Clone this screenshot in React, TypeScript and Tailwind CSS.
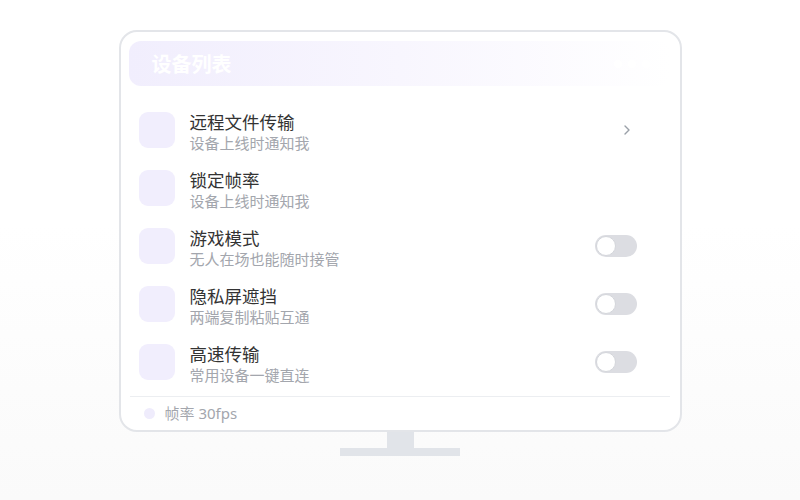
import React from "react";

const FONT = { fontFamily: '"Noto Sans", "Noto Sans CJK SC", sans-serif' };

type Row = { title: string; sub: string; trail: "chevron" | "toggle" | "none" };

const rows: Row[] = [
  { title: "远程文件传输", sub: "设备上线时通知我", trail: "chevron" },
  { title: "锁定帧率", sub: "设备上线时通知我", trail: "none" },
  { title: "游戏模式", sub: "无人在场也能随时接管", trail: "toggle" },
  { title: "隐私屏遮挡", sub: "两端复制粘贴互通", trail: "toggle" },
  { title: "高速传输", sub: "常用设备一键直连", trail: "toggle" },
];

function Toggle() {
  return (
    <div className="w-[42px] h-[22px] rounded-full bg-[#dcdde2] flex items-center p-[1px]">
      <div className="w-[20px] h-[20px] rounded-full bg-white border border-[#d4d6db]" />
    </div>
  );
}

function Chevron() {
  return (
    <svg width="8" height="12" viewBox="0 0 8 12" className="mr-[6px]">
      <path d="M2 2 L6 6 L2 10" fill="none" stroke="#9aa0a8" strokeWidth="1.4" strokeLinecap="round" strokeLinejoin="round" />
    </svg>
  );
}

export default function App() {
  return (
    <div
      className="w-[800px] h-[500px] bg-gradient-to-b from-white from-45% to-[#fafafa] flex flex-col items-center pt-[30px]"
      style={FONT}
    >
      <div className="w-[563px] h-[402px] border-2 border-[#e3e5e9] rounded-[18px] bg-white pt-[9px] pl-[8px] pr-[10px] flex flex-col">
        <div className="h-[45px] rounded-[12px] bg-gradient-to-r from-[#f1eefd] via-[#f8f6fe] to-white flex items-center pl-[23px] pr-[20px]">
          <span className="text-white font-bold text-[20px] leading-none mt-[2px]">设备列表</span>
          <div className="ml-auto flex gap-[6px]">
            <div className="w-[8px] h-[8px] rounded-full bg-white" />
            <div className="w-[8px] h-[8px] rounded-full bg-white" />
            <div className="w-[8px] h-[8px] rounded-full bg-white" />
          </div>
        </div>
        <div className="mt-[15px] flex flex-col">
          {rows.map((r) => (
            <div key={r.title} className="h-[58px] flex items-center pl-[10px] pr-[33px]">
              <div className="w-[36px] h-[36px] rounded-[9px] bg-[#f1eefd] shrink-0" />
              <div className="ml-[15px] flex flex-col pt-[3px]">
                <span className="text-[17.5px] leading-[22px] text-[#333333]">{r.title}</span>
                <span className="text-[15px] leading-[20px] text-[#a3a6ad]">{r.sub}</span>
              </div>
              <div className="ml-auto flex items-center">
                {r.trail === "toggle" && <Toggle />}
                {r.trail === "chevron" && <Chevron />}
              </div>
            </div>
          ))}
        </div>
        <div className="mt-[5px] ml-[1px] border-t border-[#eceef1] flex-1 flex items-center pl-[14px]">
          <div className="w-[11px] h-[11px] rounded-full bg-[#efecfc]" />
          <span className="ml-[10px] text-[15px] text-[#a3a6ad] leading-none">帧率 30fps</span>
        </div>
      </div>
      <div className="w-[27px] h-[16px] bg-[#e1e4e9]" />
      <div className="w-[120px] h-[8px] bg-[#e1e4e9]" />
    </div>
  );
}
